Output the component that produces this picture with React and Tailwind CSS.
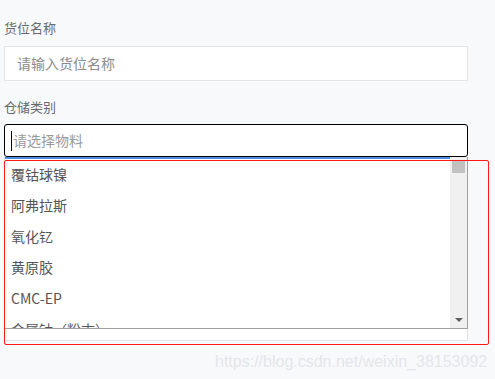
import { useState } from "react";

const options = ["覆钴球镍", "阿弗拉斯", "氧化钇", "黄原胶", "CMC-EP", "金属钴（粉末）"];

export default function App() {
  const [query] = useState("");

  return (
    <div
      className="relative h-[379px] w-[495px] overflow-hidden bg-[#f8f9fb] pl-1 pt-[18px]"
      style={{ fontFamily: '"Noto Sans CJK SC", "Noto Sans", sans-serif' }}
    >
      <div className="w-[464px]">
        <div className="mb-2 text-[13px] leading-[20px] text-[#666a70]">货位名称</div>
        <div className="flex h-[35px] items-center border border-[#e3e4e6] bg-white pl-3 text-[14px] text-[#8c8c8c]">
          请输入货位名称
        </div>

        <div className="mt-4 mb-[7px] text-[13px] leading-[20px] text-[#666a70]">仓储类别</div>
        <div className="flex h-[33px] items-center rounded-[3px] border border-black bg-white pl-[6px] text-[14px] text-[#9a9a9a]">
          <span className="mr-px h-[20px] w-px bg-black" />
          {query || "请选择物料"}
        </div>

        <div className="relative">
          {/* field behind the open list */}
          <div className="h-[184px] border border-t-0 border-[#e3e4e6] bg-white" />

          {/* open dropdown list */}
          <div className="absolute top-0 left-px right-0 flex h-[172px] overflow-hidden border-r border-b border-[#a0a0a0] bg-white">
            <div className="flex-1 overflow-hidden border-t-2 border-[#4a8ee6]">
              {options.map((o) => (
                <div key={o} className="flex h-[31px] items-center pl-[6px] text-[14px] text-[#555555]">
                  {o}
                </div>
              ))}
            </div>
            <div className="relative w-[17px] bg-[#f0f0f0]">
              <div className="mx-[2px] mt-[3px] h-[13px] bg-[#c1c1c1]" />
              <div className="absolute bottom-[6px] left-[5px] h-0 w-0 border-x-[4px] border-t-[4px] border-x-transparent border-t-[#606060]" />
            </div>
          </div>
        </div>
      </div>

      {/* red annotation */}
      <div className="absolute top-[160px] left-1 h-[185px] w-[485px] rounded-[2px] border border-[#ff1a1a]" />

      <div
        className="absolute top-[351px] left-[215px] text-[16px] leading-[22px] text-[#e4e6ea]"
        style={{ fontFamily: '"Liberation Sans", Arial, sans-serif' }}
      >
        https://blog.csdn.net/weixin_38153092
      </div>
    </div>
  );
}
